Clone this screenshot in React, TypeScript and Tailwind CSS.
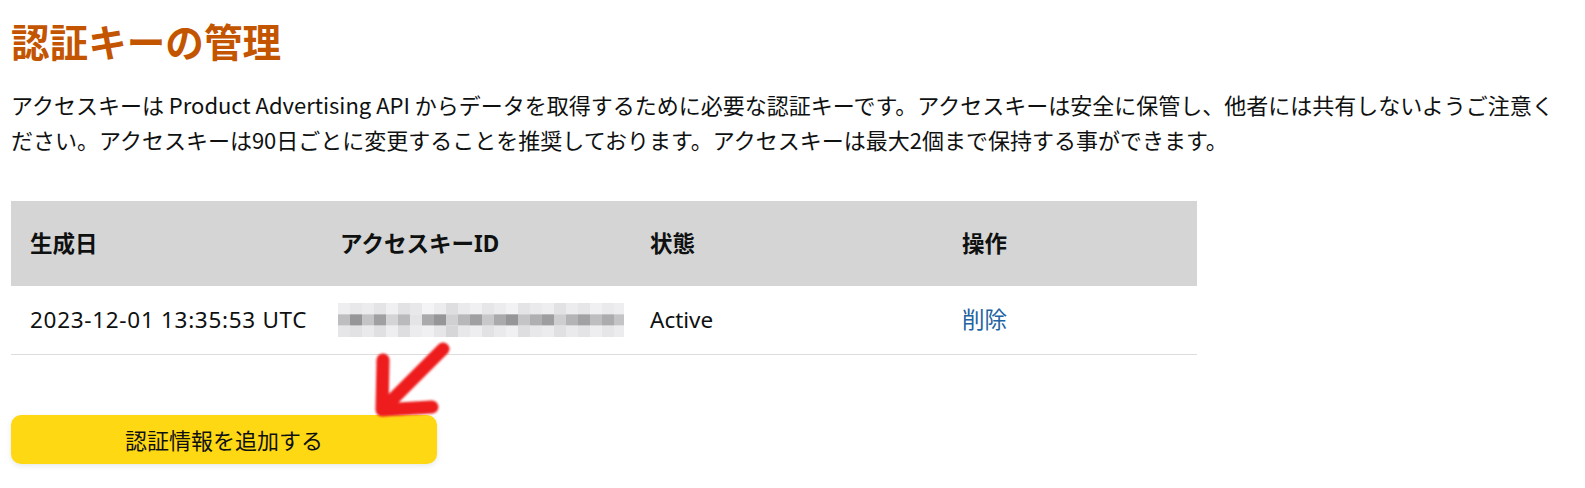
import React from 'react';

const FONT = "font-['Noto_Sans_CJK_JP','Noto_Sans',sans-serif]";
const TABLE_FONT = "font-['Noto_Sans','Noto_Sans_CJK_JP',sans-serif]";

// gray shades of the pixelated (masked) access key, 3 rows x 24 blocks
const top = [238, 232, 236, 228, 240, 226, 232, 244, 236, 222, 234, 240, 230, 236, 242, 228, 234, 238, 226, 236, 230, 240, 234, 238];
const mid = [190, 150, 196, 160, 212, 186, 228, 170, 150, 208, 184, 160, 200, 170, 150, 196, 176, 158, 206, 180, 162, 190, 172, 196];
const bot = [230, 226, 234, 224, 238, 222, 236, 240, 230, 214, 232, 238, 226, 234, 240, 222, 232, 236, 224, 234, 228, 238, 230, 236];

const MaskedKey: React.FC = () => (
  <svg width="286" height="34" viewBox="0 0 286 34" className="block">
    {[top, mid, bot].map((row, r) =>
      row.map((g, c) => (
        <rect
          key={`${r}-${c}`}
          x={c * 12}
          y={r * 11.3}
          width={12}
          height={11.4}
          fill={`rgb(${g},${g},${g + 2})`}
        />
      ))
    )}
  </svg>
);

const Arrow: React.FC = () => (
  <svg width="100" height="100" viewBox="0 0 100 100" className="pointer-events-none absolute left-[352px] top-[-80px]">
    <defs>
      <filter id="soft" x="-20%" y="-20%" width="140%" height="140%">
        <feGaussianBlur stdDeviation="1.3" />
      </filter>
    </defs>
    <g stroke="#ee1a1a" strokeWidth="13" strokeLinecap="round" strokeLinejoin="round" fill="none" filter="url(#soft)">
      <path d="M80 14 L21 73" />
      <path d="M20 25 L19 75 L69 72" />
    </g>
  </svg>
);

export default function App() {
  const cols = 'grid grid-cols-[310px_310px_312px_1fr] items-center pl-[19px]';
  return (
    <div className={`min-h-screen bg-white px-[11px] pt-[14px] text-[#0f1111] ${FONT}`}>
      <h1 className="text-[38.6px] font-bold leading-[52px] text-[#c45500]">認証キーの管理</h1>
      <p className="mt-[21px] w-[1560px] text-[22px] leading-[35px]">
        アクセスキーは Product Advertising API からデータを取得するために必要な認証キーです。アクセスキーは安全に保管し、他者には共有しないようご注意ください。アクセスキーは90日ごとに変更することを推奨しております。アクセスキーは最大2個まで保持する事ができます。
      </p>

      <div className={`mt-[44px] w-[1186px] ${TABLE_FONT}`}>
        <div className={`${cols} h-[85px] bg-[#d5d5d5] text-[22.5px] font-bold`}>
          <div>生成日</div>
          <div>アクセスキーID</div>
          <div>状態</div>
          <div>操作</div>
        </div>
        <div className={`${cols} h-[69px] border-b border-[#dddddd] text-[22.5px]`}>
          <div className="tracking-[0.7px]">2023-12-01 13:35:53 UTC</div>
          <div className="-ml-[2px]">
            <MaskedKey />
          </div>
          <div>Active</div>
          <div className="text-[#2162a1]">削除</div>
        </div>
      </div>

      <div className="relative mt-[60px]">
        <button className="flex h-[49px] w-[426px] items-center justify-center rounded-[10px] bg-[#ffd814] text-[22px] text-[#0f1111] shadow-[0_2px_5px_rgba(213,217,217,0.6)]">
          認証情報を追加する
        </button>
        <Arrow />
      </div>
    </div>
  );
}
